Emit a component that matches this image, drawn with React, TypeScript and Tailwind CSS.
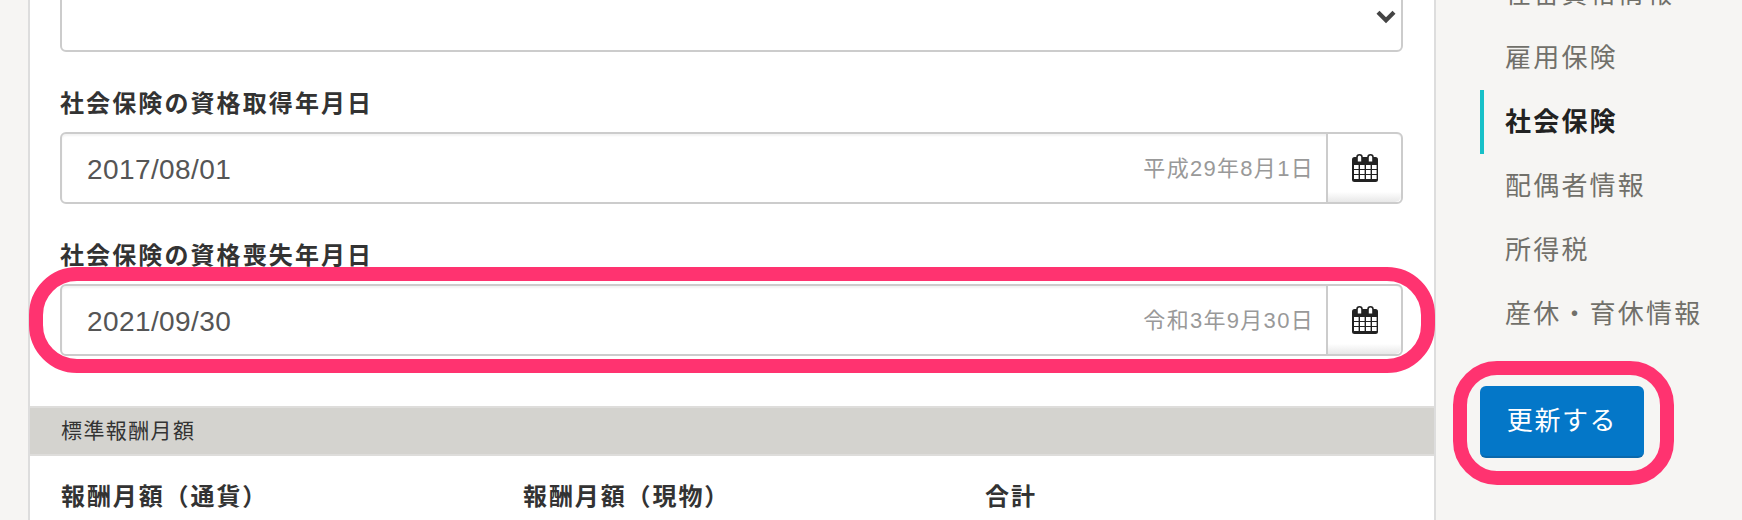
const FONT = "font-['Liberation_Sans','Noto_Sans_CJK_JP',sans-serif]";

const CalendarIcon = () => (
  <svg width="26" height="28" viewBox="0 0 26 28" aria-hidden="true">
    <rect x="0" y="3" width="26" height="25" rx="2.5" fill="#222" />
    <rect x="5" y="0.8" width="5" height="10" rx="2.5" fill="#fff" stroke="#222" strokeWidth="1.6" />
    <rect x="16" y="0.8" width="5" height="10" rx="2.5" fill="#fff" stroke="#222" strokeWidth="1.6" />
    <rect x="0" y="7.5" width="26" height="3" fill="#222" />
    {[2, 8, 14, 20].map((x) =>
      [11, 16, 21].map((y) => (
        <rect key={`${x}-${y}`} x={x} y={y} width="4.6" height="4" fill="#fff" />
      ))
    )}
  </svg>
);

const DateField = ({ value, era }: { value: string; era: string }) => (
  <div className="flex h-[72px] rounded-md border-2 border-[#cccccc] bg-white shadow-[inset_0_2px_2px_rgba(0,0,0,0.05)]">
    <div className="flex-1 flex items-center pl-[25px] pt-[3px] text-[28px] tracking-[0.4px] text-[#555555]">{value}</div>
    <div className="flex items-center pr-[12px] text-[22px] tracking-[1.3px] text-[#999999]">{era}</div>
    <div className="w-[75px] flex items-center justify-center border-l-2 border-[#cccccc] rounded-r-md bg-gradient-to-b from-white from-85% to-[#e8e8e8]">
      <CalendarIcon />
    </div>
  </div>
);

const navItems = ["在留資格情報", "雇用保険", "社会保険", "配偶者情報", "所得税", "産休・育休情報"];

export default function App() {
  return (
    <div className={`relative h-[520px] w-[1742px] overflow-hidden bg-[#f6f5f3] ${FONT}`}>
      <div className="flex h-full">
        {/* Main form */}
        <div className="ml-[28px] w-[1408px] h-full border-x-2 border-[#dddddd] bg-white">
          <div className="pl-[30px] pr-[31px]">
            <div className="relative h-[72px] -mt-[20px] rounded-md border-2 border-[#cccccc] bg-white">
              <svg className="absolute right-[5px] top-[27px]" width="20" height="15" viewBox="0 0 20 15" aria-hidden="true">
                <path d="M2 3.2 10 11.2l8-8" fill="none" stroke="#444444" strokeWidth="4.2" />
              </svg>
            </div>
            <div className="mt-[36px] h-[44px] pb-[12px] flex items-center text-[24px] font-bold tracking-[2.1px] text-[#333333]">
              社会保険の資格取得年月日
            </div>
            <DateField value="2017/08/01" era="平成29年8月1日" />
            <div className="mt-[36px] h-[44px] pb-[12px] flex items-center text-[24px] font-bold tracking-[2.1px] text-[#333333]">
              社会保険の資格喪失年月日
            </div>
            <DateField value="2021/09/30" era="令和3年9月30日" />
          </div>

          <div className="mt-[50px] h-[50px] flex items-center pl-[31px] border-y-2 border-[#dedddb] bg-[#d4d3cf] text-[21px] tracking-[1.4px] text-[#333333]">
            標準報酬月額
          </div>

          <div className="flex pl-[31px] pt-[23px] text-[24px] font-bold tracking-[1.9px] text-[#333333]">
            <div className="w-[462px]">報酬月額（通貨）</div>
            <div className="w-[462px]">報酬月額（現物）</div>
            <div>合計</div>
          </div>
        </div>

        {/* Side nav */}
        <div className="pl-[44px] -mt-[38px]">
          {navItems.map((item) => (
            <div
              key={item}
              className={`h-16 flex items-center pl-[21px] border-l-4 text-[26px] tracking-[2.2px] ${
                item === "社会保険"
                  ? "border-[#17c0c8] font-bold text-[#222222]"
                  : "border-transparent text-[#71706a]"
              }`}
            >
              {item}
            </div>
          ))}
          <button className="mt-[40px] w-[164px] h-[72px] rounded-md bg-[#0477c8] border-b-2 border-[#0a68ac] text-[26px] tracking-[1.6px] text-white">
            更新する
          </button>
        </div>
      </div>

      {/* Annotation rings */}
      <div className="absolute left-[29px] top-[267px] w-[1406px] h-[106px] rounded-[48px] border-[14px] border-[#ff3370]" />
      <div className="absolute left-[1453px] top-[361px] w-[221px] h-[124px] rounded-[44px] border-[14px] border-[#ff3370]" />
    </div>
  );
}
